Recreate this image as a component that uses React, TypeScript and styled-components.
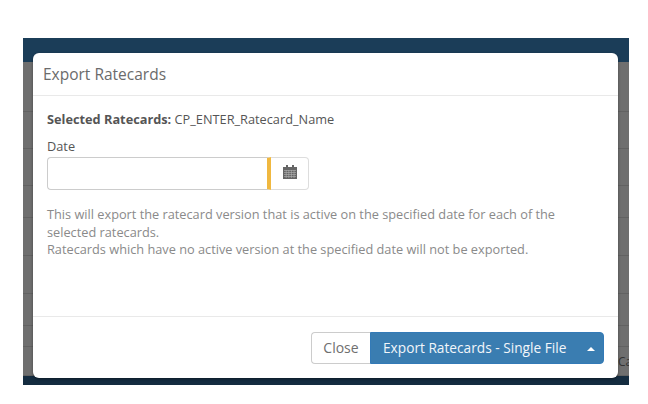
import React from "react";
import styled, { createGlobalStyle } from "styled-components";

const GlobalStyle = createGlobalStyle`
  html, body {
    margin: 0;
    padding: 0;
    background: #fff;
    font-family: "Open Sans", "Liberation Sans", sans-serif;
  }
`;

const Stage = styled.div`
  position: relative;
  width: 606px;
  height: 347px;
  margin: 38px 0 0 23px;
  display: flex;
  flex-direction: column;
  overflow: hidden;
  background: #6f6f6f;
`;
const TopBar = styled.div`
  height: 24px;
  background: #1b3d58;
`;
const BgRow = styled.div<{ $h: number }>`
  height: ${(props) => props.$h}px;
  flex: none;
  box-sizing: border-box;
  border-bottom: 1px solid #626262;
  display: flex;
  justify-content: flex-end;
  align-items: center;
  font-size: 12px;
  color: #333;
  overflow: hidden;
`;
const BgCell = styled.span`
  width: 11px;
  white-space: nowrap;
  overflow: hidden;
`;
const BottomBar = styled.div`
  flex: 1;
  background: #142c40;
`;

const Modal = styled.div`
  position: absolute;
  left: 10px;
  top: 15px;
  width: 585px;
  height: 325px;
  background: #fff;
  border-radius: 6px;
  display: flex;
  flex-direction: column;
  box-shadow: 0 1px 3px rgba(0, 0, 0, 0.4);
`;
const Header = styled.div`
  height: 43px;
  box-sizing: border-box;
  border-bottom: 1px solid #e9e9e9;
  padding: 0 10px;
  display: flex;
  align-items: center;
  font-size: 15.5px;
  color: #6b6b6b;
`;
const Body = styled.div`
  flex: 1;
  padding: 15px 14px 0;
  font-size: 12.75px;
  color: #555;
`;
const Selected = styled.div`
  line-height: 17px;
`;
const Label = styled.div`
  margin-top: 10px;
  line-height: 17px;
`;
const InputGroup = styled.div`
  display: flex;
  width: 262px;
  height: 33px;
  margin-top: 2px;
`;
const DateInput = styled.input`
  width: 224px;
  flex: none;
  box-sizing: border-box;
  border: 1px solid #ccc;
  border-right: 4px solid #f0b840;
  border-radius: 4px 0 0 4px;
  outline: none;
  background: #fff;
`;
const Addon = styled.div`
  flex: 1;
  box-sizing: border-box;
  border: 1px solid #ddd;
  border-left: none;
  border-radius: 0 4px 4px 0;
  display: flex;
  align-items: center;
  justify-content: center;
  padding-bottom: 4px;
`;
const Help = styled.p`
  margin: 16px 0 0;
  line-height: 17.5px;
  color: #8a8a8a;
`;
const Footer = styled.div`
  height: 62px;
  box-sizing: border-box;
  border-top: 1px solid #e9e9e9;
  padding: 15px 14px 0 0;
  display: flex;
  justify-content: flex-end;
  align-items: flex-start;
`;
const CloseButton = styled.button`
  height: 32px;
  width: 59px;
  box-sizing: border-box;
  padding: 0 0 2px;
  border: 1px solid #ccc;
  border-right: none;
  border-radius: 4px 0 0 4px;
  background: #fff;
  color: #6f6f6f;
  font: 14px "Open Sans", sans-serif;
`;
const ExportButton = styled.button`
  height: 32px;
  width: 234px;
  box-sizing: border-box;
  padding: 0 8px 2px 12px;
  border: 1px solid #337ab7;
  border-radius: 0 4px 4px 0;
  background: #3a7db1;
  color: #f2f6fa;
  font: 13.7px "Open Sans", sans-serif;
  display: flex;
  align-items: center;
  justify-content: space-between;
`;
const Caret = styled.span`
  width: 0;
  height: 0;
  margin-top: 4px;
  border-left: 4px solid transparent;
  border-right: 4px solid transparent;
  border-bottom: 4px solid #fff;
`;

const CalendarIcon = () => (
  <svg width="14" height="14" viewBox="0 0 14 14">
    <path d="M0 2h14v12H0z" fill="#666" />
    <path d="M3 0h2v3H3zM9 0h2v3H9z" fill="#666" />
    <path
      d="M1 5.5h12M1 7.5h12M1 9.5h12M1 11.5h12M3.2 5v8M5.8 5v8M8.4 5v8M11 5v8"
      stroke="#b5b5b5"
      strokeWidth="0.6"
      fill="none"
    />
  </svg>
);

const rows = [50, 37, 37, 32, 38, 38, 32, 21];

const App = () => {
  return (
    <>
      <GlobalStyle />
      <Stage>
        <TopBar />
        {rows.map((h, i) => (
          <BgRow key={i} $h={h} />
        ))}
        <BgRow $h={29}>
          <BgCell>Ca</BgCell>
        </BgRow>
        <BottomBar />
        <Modal>
          <Header>Export Ratecards</Header>
          <Body>
            <Selected>
              <b>Selected Ratecards:</b> CP_ENTER_Ratecard_Name
            </Selected>
            <Label>Date</Label>
            <InputGroup>
              <DateInput />
              <Addon>
                <CalendarIcon />
              </Addon>
            </InputGroup>
            <Help>
              This will export the ratecard version that is active on the specified date for each of the
              <br />
              selected ratecards.
              <br />
              Ratecards which have no active version at the specified date will not be exported.
            </Help>
          </Body>
          <Footer>
            <CloseButton>Close</CloseButton>
            <ExportButton>
              Export Ratecards - Single File
              <Caret />
            </ExportButton>
          </Footer>
        </Modal>
      </Stage>
    </>
  );
};

export default App;
